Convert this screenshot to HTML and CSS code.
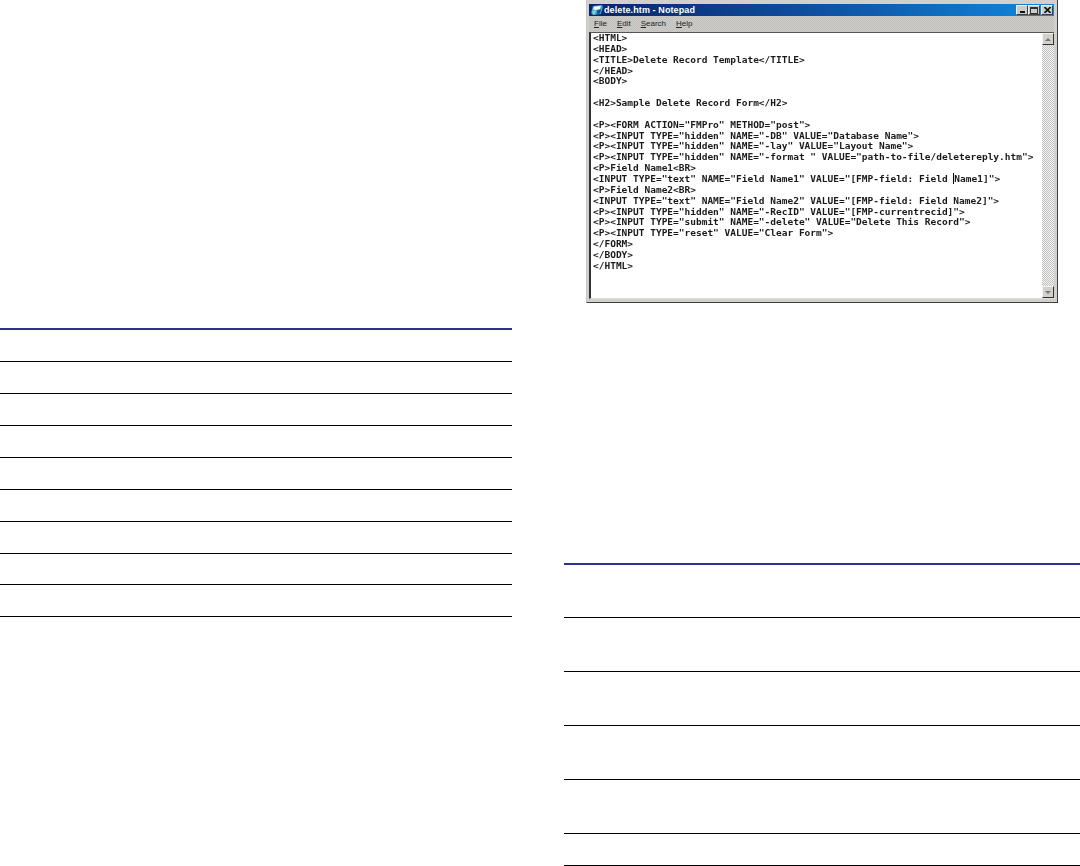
FILE: index.html
```html
<!DOCTYPE html>
<html lang="en">
<head>
<meta charset="utf-8">
<title>Delete Record Template</title>
<link rel="stylesheet" href="styles.css">
</head>
<body>
<div class="page">
  <section class="col-left">
    <div class="rules">
      <div class="row"></div>
      <div class="row"></div>
      <div class="row"></div>
      <div class="row"></div>
      <div class="row"></div>
      <div class="row"></div>
      <div class="row"></div>
      <div class="row row-short"></div>
      <div class="row"></div>
    </div>
  </section>
  <section class="col-right">
    <div class="window">
      <div class="titlebar">
        <svg class="app-icon" width="12" height="10" viewBox="0 0 12 10" aria-hidden="true">
          <path d="M2 1 L11 0 L12 2 L10 9 L2 10 L0 8 Z" fill="#3f9fc4"/>
          <path d="M3 1.5 L10 0.8 L9 4 L5 5 L2 4.5 Z" fill="#eaf6f6"/>
          <path d="M1 6 L5 5 L4 9.5 L2 9.5 Z" fill="#7fd0d8"/>
          <path d="M6 5.5 L10 4.5 L9 8.5 L6 9 Z" fill="#12508c"/>
        </svg>
        <span class="title-text">delete.htm - Notepad</span>
        <div class="caption-buttons">
          <span class="cap-btn"><i class="glyph-min"></i></span>
          <span class="cap-btn"><i class="glyph-max"></i></span>
          <span class="cap-btn cap-close">
            <svg width="7" height="6" viewBox="0 0 7 6" aria-hidden="true"><path d="M0.5 0 L6.5 6 M6.5 0 L0.5 6" stroke="#111" stroke-width="1.6" fill="none"/></svg>
          </span>
        </div>
      </div>
      <div class="menubar">
        <span class="menu-item"><u>F</u>ile</span>
        <span class="menu-item"><u>E</u>dit</span>
        <span class="menu-item"><u>S</u>earch</span>
        <span class="menu-item"><u>H</u>elp</span>
      </div>
      <div class="client">
        <div class="code">
          <div class="line">&lt;HTML&gt;</div>
          <div class="line">&lt;HEAD&gt;</div>
          <div class="line">&lt;TITLE&gt;Delete Record Template&lt;/TITLE&gt;</div>
          <div class="line">&lt;/HEAD&gt;</div>
          <div class="line">&lt;BODY&gt;</div>
          <div class="line"></div>
          <div class="line">&lt;H2&gt;Sample Delete Record Form&lt;/H2&gt;</div>
          <div class="line"></div>
          <div class="line">&lt;P&gt;&lt;FORM ACTION="FMPro" METHOD="post"&gt;</div>
          <div class="line">&lt;P&gt;&lt;INPUT TYPE="hidden" NAME="-DB" VALUE="Database Name"&gt;</div>
          <div class="line">&lt;P&gt;&lt;INPUT TYPE="hidden" NAME="-lay" VALUE="Layout Name"&gt;</div>
          <div class="line">&lt;P&gt;&lt;INPUT TYPE="hidden" NAME="-format " VALUE="path-to-file/deletereply.htm"&gt;</div>
          <div class="line">&lt;P&gt;Field Name1&lt;BR&gt;</div>
          <div class="line">&lt;INPUT TYPE="text" NAME="Field Name1" VALUE="[FMP-field: Field <span class="caret">Name1</span>]"&gt;</div>
          <div class="line">&lt;P&gt;Field Name2&lt;BR&gt;</div>
          <div class="line">&lt;INPUT TYPE="text" NAME="Field Name2" VALUE="[FMP-field: Field Name2]"&gt;</div>
          <div class="line">&lt;P&gt;&lt;INPUT TYPE="hidden" NAME="-RecID" VALUE="[FMP-currentrecid]"&gt;</div>
          <div class="line">&lt;P&gt;&lt;INPUT TYPE="submit" NAME="-delete" VALUE="Delete This Record"&gt;</div>
          <div class="line">&lt;P&gt;&lt;INPUT TYPE="reset" VALUE="Clear Form"&gt;</div>
          <div class="line">&lt;/FORM&gt;</div>
          <div class="line">&lt;/BODY&gt;</div>
          <div class="line">&lt;/HTML&gt;</div>
        </div>
        <div class="scrollbar">
          <span class="scroll-btn"><i class="arrow-up"></i></span>
          <span class="scroll-btn"><i class="arrow-down"></i></span>
        </div>
      </div>
    </div>
    <div class="rules rules-tall">
      <div class="row row-first"></div>
      <div class="row"></div>
      <div class="row"></div>
      <div class="row"></div>
      <div class="row"></div>
      <div class="row row-low"></div>
    </div>
  </section>
</div>
</body>
</html>
```
FILE: styles.css
```css
html, body {
  margin: 0;
  padding: 0;
  background: #fff;
}
.page {
  display: flex;
  width: 1080px;
  height: 866px;
  overflow: hidden;
}
.col-left {
  width: 512px;
  padding-top: 328px;
  flex: none;
}
.col-right {
  margin-left: 52px;
  width: 516px;
  flex: none;
}
.rules {
  border-top: 2px solid #2e3192;
}
.row {
  height: 31px;
  border-bottom: 1px solid #000;
}
.row-short {
  height: 30px;
}
.rules-tall {
  margin-top: 260px;
}
.rules-tall .row {
  height: 53px;
}
.rules-tall .row-first {
  height: 52px;
}
.rules-tall .row-low {
  height: 31px;
}
.window {
  box-sizing: border-box;
  width: 472px;
  height: 303px;
  margin-left: 22px;
  padding: 4px 3px 3px 2px;
  background: #d2d0ca;
  border-right: 1px solid #404040;
  border-bottom: 1px solid #404040;
  border-left: 1px solid #c8c8c8;
  display: flex;
  flex-direction: column;
}
.titlebar {
  height: 12px;
  flex: none;
  display: flex;
  align-items: center;
  padding-left: 2px;
  gap: 1px;
  background: linear-gradient(90deg, #0a246a 0%, #0f56a8 55%, #1088dc 100%);
}
.app-icon {
  flex: none;
}
.title-text {
  font: bold 9px/12px "Liberation Sans", Arial, sans-serif;
  color: #fff;
  letter-spacing: 0.1px;
  white-space: nowrap;
}
.caption-buttons {
  margin-left: auto;
  display: flex;
  padding-right: 1px;
}
.cap-btn {
  box-sizing: border-box;
  width: 12px;
  height: 10px;
  background: #cfccc6;
  border-right: 1px solid #404040;
  border-bottom: 1px solid #404040;
  border-top: 1px solid #eee;
  border-left: 1px solid #eee;
  display: flex;
  align-items: flex-end;
  justify-content: center;
}
.cap-close {
  margin-left: 1px;
  align-items: center;
}
.glyph-min {
  display: block;
  width: 5px;
  height: 2px;
  background: #111;
  margin-bottom: 1px;
}
.glyph-max {
  display: block;
  box-sizing: border-box;
  width: 8px;
  height: 7px;
  border: 1px solid #333;
  border-top-width: 2px;
}
.menubar {
  height: 16px;
  flex: none;
  display: flex;
  align-items: center;
  padding-left: 5px;
  gap: 10px;
  background: #c6c5c1 repeating-conic-gradient(#c2c1bd 0 25%, #cccbc7 0 50%) 0 0 / 2px 2px;
}
.menu-item {
  font: 8px/12px "Liberation Sans", Arial, sans-serif;
  color: #222;
}
.client {
  flex: 1;
  min-height: 0;
  display: flex;
  background: #fff;
  border-top: 1px solid #555;
  border-left: 2px solid #333;
  border-bottom: 1px solid #ddd;
}
.code {
  flex: 1;
  padding-left: 2px;
  font: bold 9.5px/10.85px "DejaVu Sans Mono", "Liberation Mono", monospace;
  color: #1a1a1a;
  overflow: hidden;
  filter: blur(0.3px);
}
.line {
  height: 10.85px;
  white-space: pre;
}
.caret {
  border-left: 1px solid #000;
}
.scrollbar {
  width: 12px;
  flex: none;
  display: flex;
  flex-direction: column;
  justify-content: space-between;
  background: repeating-conic-gradient(#c0c0c0 0 25%, #f4f4f4 0 50%) 0 0 / 2px 2px;
}
.scroll-btn {
  box-sizing: border-box;
  height: 12px;
  background: #d2d0ca;
  border-top: 1px solid #f4f4f4;
  border-left: 1px solid #f4f4f4;
  border-right: 1px solid #333;
  border-bottom: 1px solid #333;
  display: flex;
  align-items: center;
  justify-content: center;
}
.arrow-up {
  width: 0;
  height: 0;
  border-left: 3px solid transparent;
  border-right: 3px solid transparent;
  border-bottom: 3px solid #777;
}
.arrow-down {
  width: 0;
  height: 0;
  border-left: 3px solid transparent;
  border-right: 3px solid transparent;
  border-top: 3px solid #777;
}
```
